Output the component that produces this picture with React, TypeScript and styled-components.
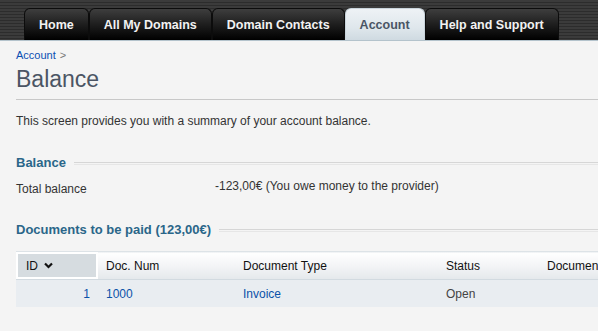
import React from "react";
import styled, { createGlobalStyle } from "styled-components";

const Global = createGlobalStyle`
  html, body { margin: 0; padding: 0; background: #f4f4f4; overflow: hidden; }
  body { font-family: "Liberation Sans", Arial, sans-serif; color: #333; }
`;

const Page = styled.div`
  width: 598px;
  height: 331px;
  overflow: hidden;
  background: #f4f4f4;
`;

const NavBar = styled.nav`
  height: 41px;
  border-bottom: 1px solid #b4c3cc;
  background: repeating-linear-gradient(
    to bottom,
    #3b3b3b 0px,
    #3b3b3b 2px,
    #2c2c2c 2px,
    #2c2c2c 3px
  );
  display: flex;
  align-items: flex-end;
  padding-left: 24px;
  gap: 0;
  box-sizing: border-box;
`;

const Tab = styled.div<{ $active?: boolean }>`
  height: 32px;
  box-sizing: border-box;
  padding: 1px 14px 0;
  display: flex;
  align-items: center;
  font-size: 12.5px;
  font-weight: bold;
  border: 1px solid ${(p) => (p.$active ? "#c9d4db" : "#0c0c0c")};
  border-bottom: none;
  border-radius: 6px 6px 0 0;
  color: ${(p) => (p.$active ? "#4a5565" : "#f2f2f2")};
  background: ${(p) =>
    p.$active
      ? "linear-gradient(to bottom, #eef2f5 0%, #dfe7ec 60%, #cfdae1 100%)"
      : "linear-gradient(to bottom, #3e3e3e 0%, #1e1e1e 50%, #000 100%)"};
`;

const Content = styled.main`
  padding: 7px 0 0 16px;
`;

const Breadcrumb = styled.div`
  font-size: 11px;
  line-height: 14px;
  color: #777;
  span { color: #0a4fb3; margin-right: 4px; }
`;

const Title = styled.h1`
  margin: 3px 0 0;
  font-size: 23px;
  font-weight: normal;
  color: #4b5564;
  line-height: 28px;
  padding-bottom: 6px;
  border-bottom: 1px solid #c8c8c8;
`;

const Intro = styled.p`
  margin: 13px 0 0;
  font-size: 12px;
  line-height: 16px;
  color: #333;
`;

const SectionHead = styled.h2<{ $top: number }>`
  margin: ${(p) => p.$top}px 0 0;
  display: flex;
  align-items: center;
  gap: 8px;
  font-size: 13px;
  font-weight: bold;
  color: #2a6689;
  line-height: 16px;
  white-space: nowrap;
  &::after {
    content: "";
    flex: 1;
    height: 1px;
    border-top: 1px solid #d6d6d6;
    border-bottom: 1px solid #e6e6e6;
  }
`;

const InfoRow = styled.div`
  display: grid;
  grid-template-columns: 199px 1fr;
  margin-top: 10px;
  font-size: 12px;
  color: #333;
  line-height: 16px;
`;

const Value = styled.div`
  margin-top: -3px;
`;

const TableWrap = styled.div`
  margin-top: 13px;
  width: 700px;
`;

const Table = styled.table`
  border-collapse: collapse;
  width: 700px;
  font-size: 12px;
  border-top: 1px solid #dde3e7;
`;

const HeadCell = styled.th<{ $w: number; $sorted?: boolean }>`
  width: ${(p) => p.$w}px;
  height: 28px;
  padding: 0 8px;
  text-align: left;
  font-weight: normal;
  color: #111;
  box-sizing: border-box;
  border-bottom: 1px solid #d2dae0;
  background: ${(p) =>
    p.$sorted
      ? "#d6dce0"
      : "linear-gradient(to bottom, #ffffff 0%, #f3f4f6 50%, #e4e8eb 100%)"};
  box-shadow: ${(p) => (p.$sorted ? "inset 0 0 0 2px #fff" : "none")};
  padding-left: ${(p) => (p.$sorted ? 10 : 8)}px;
`;

const Caret = styled.svg`
  margin-left: 6px;
  vertical-align: middle;
  position: relative;
  top: -1px;
`;

const Row = styled.tr`
  background: #e9edf1;
`;

const Cell = styled.td<{ $right?: boolean; $link?: boolean }>`
  height: 27px;
  padding: 0 8px;
  text-align: ${(p) => (p.$right ? "right" : "left")};
  color: ${(p) => (p.$link ? "#0b52a9" : "#444")};
`;

export default function App() {
  return (
    <Page>
      <Global />
      <NavBar>
        <Tab>Home</Tab>
        <Tab>All My Domains</Tab>
        <Tab>Domain Contacts</Tab>
        <Tab $active>Account</Tab>
        <Tab>Help and Support</Tab>
      </NavBar>
      <Content>
        <Breadcrumb>
          <span>Account</span>&gt;
        </Breadcrumb>
        <Title>Balance</Title>
        <Intro>This screen provides you with a summary of your account balance.</Intro>
        <SectionHead $top={26}>Balance</SectionHead>
        <InfoRow>
          <div>Total balance</div>
          <Value>-123,00€ (You owe money to the provider)</Value>
        </InfoRow>
        <SectionHead $top={25}>Documents to be paid (123,00€)</SectionHead>
        <TableWrap>
          <Table>
            <thead>
              <tr>
                <HeadCell $w={82} $sorted>
                  ID
                  <Caret width="9" height="7" viewBox="0 0 9 7">
                    <path d="M1 1.5 L4.5 5 L8 1.5" fill="none" stroke="#111" strokeWidth="2.2" />
                  </Caret>
                </HeadCell>
                <HeadCell $w={137}>Doc. Num</HeadCell>
                <HeadCell $w={203}>Document Type</HeadCell>
                <HeadCell $w={101}>Status</HeadCell>
                <HeadCell $w={177}>Document Date</HeadCell>
              </tr>
            </thead>
            <tbody>
              <Row>
                <Cell $right $link>1</Cell>
                <Cell $link>1000</Cell>
                <Cell $link>Invoice</Cell>
                <Cell>Open</Cell>
                <Cell></Cell>
              </Row>
            </tbody>
          </Table>
        </TableWrap>
      </Content>
    </Page>
  );
}
